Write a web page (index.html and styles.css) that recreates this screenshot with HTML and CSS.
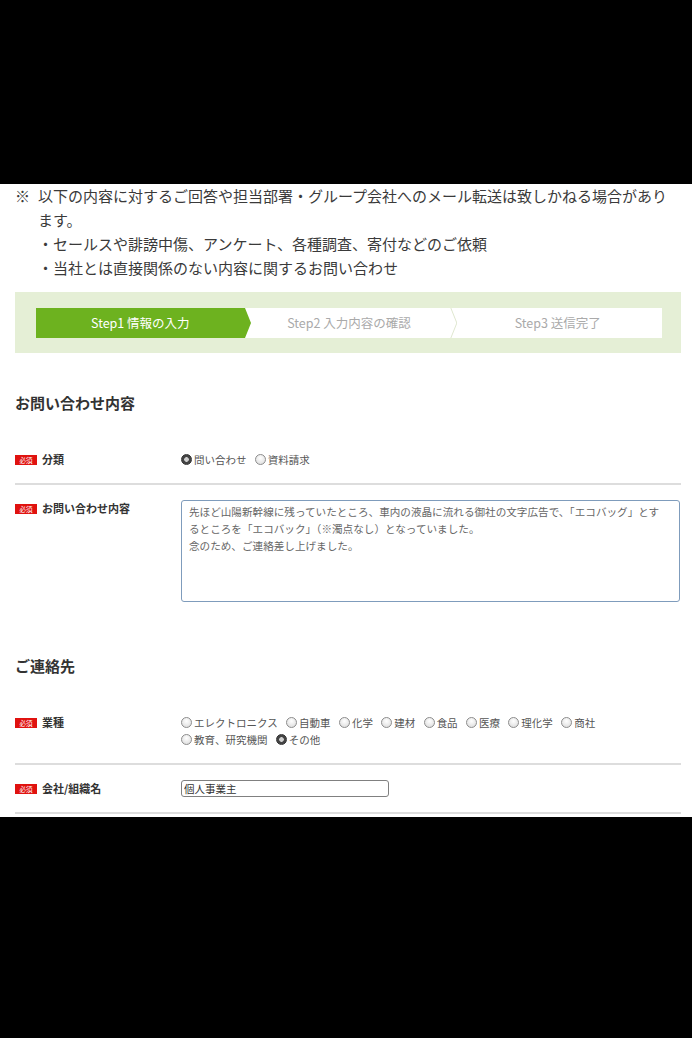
FILE: index.html
```html
<!DOCTYPE html>
<html lang="ja">
<head>
  <meta charset="UTF-8">
  <meta name="viewport" content="width=device-width, initial-scale=1.0">
  <title>お問い合わせ</title>
  <link rel="stylesheet" href="styles.css">
</head>
<body>

  <div class="page">

    <!-- 注意書き -->
    <div class="notice">
      <p class="notice-lead"><span class="notice-mark">※</span>以下の内容に対するご回答や担当部署・グループ会社へのメール転送は致しかねる場合があります。</p>
      <ul class="notice-list">
        <li>・セールスや誹謗中傷、アンケート、各種調査、寄付などのご依頼</li>
        <li>・当社とは直接関係のない内容に関するお問い合わせ</li>
      </ul>
    </div>

    <!-- ステップ -->
    <div class="steps-box">
      <ol class="steps">
        <li class="step current">Step1 情報の入力</li>
        <li class="step">Step2 入力内容の確認</li>
        <li class="step">Step3 送信完了</li>
      </ol>
    </div>

    <h2 class="section-title first">お問い合わせ内容</h2>

    <div class="form-row">
      <div class="form-label"><span class="required">必須</span>分類</div>
      <div class="form-field">
        <label class="option"><input type="radio" class="radio" name="type" checked>問い合わせ</label>
        <label class="option"><input type="radio" class="radio" name="type">資料請求</label>
      </div>
    </div>

    <div class="form-row form-row-last">
      <div class="form-label"><span class="required">必須</span>お問い合わせ内容</div>
      <div class="form-field">
        <textarea class="textarea">先ほど山陽新幹線に残っていたところ、車内の液晶に流れる御社の文字広告で、「エコバッグ」とす
るところを「エコバック」（※濁点なし）となっていました。
念のため、ご連絡差し上げました。</textarea>
      </div>
    </div>

    <h2 class="section-title">ご連絡先</h2>

    <div class="form-row">
      <div class="form-label"><span class="required">必須</span>業種</div>
      <div class="form-field">
        <label class="option"><input type="radio" class="radio" name="industry">エレクトロニクス</label>
        <label class="option"><input type="radio" class="radio" name="industry">自動車</label>
        <label class="option"><input type="radio" class="radio" name="industry">化学</label>
        <label class="option"><input type="radio" class="radio" name="industry">建材</label>
        <label class="option"><input type="radio" class="radio" name="industry">食品</label>
        <label class="option"><input type="radio" class="radio" name="industry">医療</label>
        <label class="option"><input type="radio" class="radio" name="industry">理化学</label>
        <label class="option"><input type="radio" class="radio" name="industry">商社</label>
        <label class="option"><input type="radio" class="radio" name="industry">教育、研究機関</label>
        <label class="option"><input type="radio" class="radio" name="industry" checked>その他</label>
      </div>
    </div>

    <div class="form-row">
      <div class="form-label"><span class="required">必須</span>会社/組織名</div>
      <div class="form-field">
        <input type="text" class="text-input" value="個人事業主">
      </div>
    </div>

  </div>

</body>
</html>
```

FILE: styles.css
```css
/* 全体 */
body {
  margin: 0;
  padding: 0;
  background: #000;
  font-family: "Noto Sans CJK JP", "Liberation Sans", sans-serif;
  color: #333;
}

.page {
  margin-top: 184px;
  height: 633px;
  overflow: hidden;
  background: #fff;
  padding: 0 11px 0 15px;
}

/* 注意書き */
.notice {
  font-size: 15px;
  line-height: 24px;
  color: #3a3a3a;
}

.notice-lead {
  margin: 0;
  padding-left: 23px;
  text-indent: -23px;
}

.notice-mark {
  display: inline-block;
  width: 23px;
  text-indent: 0;
}

.notice-list {
  list-style: none;
  margin: 0;
  padding: 0 0 0 23px;
}

/* ステップ */
.steps-box {
  margin-top: 12px;
  background: #e5efd6;
  padding: 16px 19px 15px 21px;
}

.steps {
  display: flex;
  list-style: none;
  margin: 0;
  padding: 0;
  background: #fff;
}

.step {
  position: relative;
  flex: 1;
  height: 30px;
  line-height: 30px;
  text-align: center;
  font-size: 12.5px;
  color: #aaa;
}

.step.current {
  background: #6db21f;
  color: #fff;
}

.step.current::after {
  content: "";
  position: absolute;
  top: 0;
  right: -6px;
  border-left: 6px solid #6db21f;
  border-top: 15px solid transparent;
  border-bottom: 15px solid transparent;
  z-index: 1;
}

.step:nth-child(2)::after {
  content: "";
  position: absolute;
  top: 0;
  right: -4px;
  width: 7px;
  height: 30px;
  background: #dfe7cf;
  clip-path: polygon(0 0, 1px 0, 7px 50%, 1px 100%, 0 100%, 6px 50%);
}

/* 見出し */
.section-title {
  margin: 38px 0 22px;
  font-size: 15px;
  line-height: 22px;
  font-weight: bold;
  color: #333;
}

.section-title.first {
  margin-top: 39px;
}

/* フォーム */
.form-row {
  display: flex;
  align-items: flex-start;
  padding: 15px 0;
  border-bottom: 2px solid #ddd;
}

.form-row-last {
  border-bottom: none;
}

.form-label {
  width: 166px;
  flex-shrink: 0;
  display: flex;
  align-items: center;
  gap: 5px;
  font-size: 11px;
  line-height: 17px;
  font-weight: bold;
  color: #333;
}

.required {
  display: inline-block;
  width: 22px;
  height: 10px;
  line-height: 10px;
  background: #e0120f;
  color: #fff;
  font-size: 6.5px;
  font-weight: normal;
  text-align: center;
}

.form-field {
  flex: 1;
  font-size: 10.5px;
  line-height: 17px;
  color: #555;
}

.option {
  display: inline-block;
  margin-right: 6px;
  white-space: nowrap;
}

.radio {
  appearance: none;
  -webkit-appearance: none;
  width: 11px;
  height: 11px;
  margin: 0 2px 0 0;
  border: 1px solid #8c8c8c;
  border-radius: 50%;
  background: radial-gradient(circle at 50% 35%, #fff, #d8d8d8);
  vertical-align: -1px;
  box-sizing: border-box;
}

.radio:checked {
  border-color: #333;
  background: radial-gradient(circle, #d0d0d0 0 2px, #444 2.6px);
}

.textarea {
  display: block;
  width: 499px;
  height: 102px;
  box-sizing: border-box;
  margin: 0;
  padding: 2px 7px;
  border: 1px solid #7f9cbc;
  border-radius: 3px;
  font-family: "Noto Sans CJK JP", "Liberation Sans", sans-serif;
  font-size: 10.6px;
  line-height: 17px;
  color: #666;
  resize: none;
  overflow: hidden;
}

.text-input {
  display: block;
  width: 208px;
  height: 17px;
  box-sizing: border-box;
  margin: 0;
  padding: 0 2px;
  border: 1px solid #808080;
  border-radius: 3px;
  font-family: "Noto Sans CJK JP", "Liberation Sans", sans-serif;
  font-size: 10.5px;
  color: #333;
}
```
